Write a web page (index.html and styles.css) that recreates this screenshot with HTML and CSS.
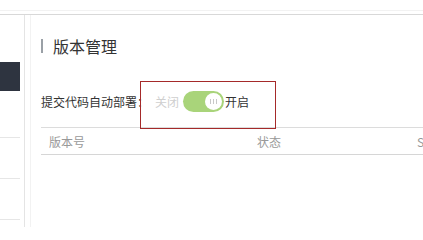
FILE: index.html
```html
<!DOCTYPE html>
<html>
<head>
<meta charset="utf-8">
<link rel="stylesheet" href="styles.css">
</head>
<body>
<div class="topbar"><div class="topbar-line"></div></div>
<div class="layout">
  <aside class="sidebar">
    <div class="side-gap"></div>
    <div class="side-active"></div>
    <div class="side-item first"></div>
    <div class="side-item"></div>
    <div class="side-item"></div>
  </aside>
  <div class="divider"></div>
  <main class="main">
    <h1 class="title"><span class="title-bar"></span>版本管理</h1>
    <div class="setting">
      <span class="label">提交代码自动部署：</span>
      <span class="off">关闭</span>
      <span class="switch"><span class="knob"><span class="grip"></span></span></span>
      <span class="on">开启</span>
      <div class="highlight"></div>
    </div>
    <div class="table-head">
      <span class="col-ver">版本号</span>
      <span class="col-status">状态</span>
      <span class="col-s">S</span>
    </div>
  </main>
</div>
</body>
</html>
```
FILE: styles.css
```css
html, body {
  margin: 0;
  padding: 0;
  background: #fff;
  font-family: "Noto Sans CJK SC", "Noto Sans", sans-serif;
  overflow: hidden;
  width: 423px;
  height: 227px;
}
.topbar {
  height: 14px;
}
.topbar-line {
  height: 10px;
  border-bottom: 1px solid #f2f2f2;
}
.layout {
  display: flex;
  border-top: 1px solid #d8d8d8;
  height: 212px;
}
.sidebar {
  width: 24px;
  border-right: 1px solid #e4e4e4;
  display: flex;
  flex-direction: column;
  flex-shrink: 0;
}
.side-gap {
  height: 47px;
  flex-shrink: 0;
}
.side-active {
  width: 20px;
  height: 29px;
  background: #2e3440;
  flex-shrink: 0;
}
.side-item {
  width: 20px;
  height: 40px;
  border-bottom: 1px solid #e6e6e6;
  flex-shrink: 0;
}
.side-item.first {
  height: 46px;
}
.divider {
  width: 5px;
  border-right: 1px solid #f2f2f2;
  flex-shrink: 0;
}
.main {
  flex: 1;
  padding-left: 10px;
  position: relative;
}
.title {
  margin: 23px 0 0 0;
  display: flex;
  align-items: center;
  height: 16px;
  font-size: 16px;
  font-weight: normal;
  color: #333;
  line-height: 16px;
}
.title-bar {
  width: 2px;
  height: 14px;
  background: #9aa0a6;
  margin-right: 10px;
}
.setting {
  margin-top: 36px;
  display: flex;
  align-items: center;
  height: 22px;
  font-size: 12px;
  color: #333;
  position: relative;
  white-space: nowrap;
}
.label {
  width: 114px;
}
.off {
  color: #cfcfcf;
  margin-right: 4px;
}
.switch {
  width: 41px;
  height: 21px;
  border-radius: 11px;
  background: #a9d47a;
  display: flex;
  align-items: center;
  justify-content: flex-end;
  box-sizing: border-box;
  padding-right: 2px;
}
.knob {
  width: 17px;
  height: 17px;
  border-radius: 50%;
  background: #fff;
  display: flex;
  align-items: center;
  justify-content: center;
}
.grip {
  width: 5px;
  height: 5px;
  border-left: 1px solid #c8c8c8;
  border-right: 1px solid #c8c8c8;
  position: relative;
}
.grip::after {
  content: "";
  position: absolute;
  left: 2px;
  top: 0;
  width: 1px;
  height: 5px;
  background: #c8c8c8;
}
.on {
  margin-left: 1px;
}
.highlight {
  position: absolute;
  left: 99px;
  top: -9px;
  width: 134px;
  height: 46px;
  border: 1px solid #a52a2a;
}
.table-head {
  margin-top: 15px;
  height: 26px;
  border-top: 1px solid #dcdcdc;
  border-bottom: 1px solid #d6d6d6;
  display: flex;
  align-items: center;
  font-size: 12px;
  color: #999;
}
.col-ver {
  padding-left: 8px;
  width: 208px;
}
.col-status {
  width: 160px;
}
.col-s {
  flex: 1;
}
```
